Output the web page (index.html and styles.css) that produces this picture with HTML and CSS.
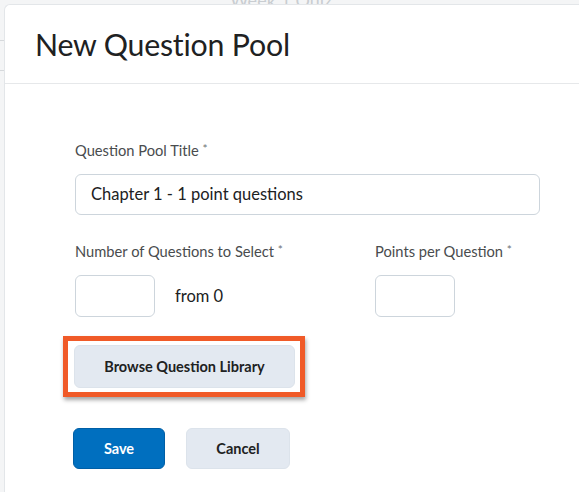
FILE: index.html
```html
<!DOCTYPE html>
<html>
<head>
<meta charset="utf-8">
<link rel="stylesheet" href="styles.css">
</head>
<body>
<div class="page">
  <div class="bg-title">Week 1 Quiz</div>
  <div class="bg-line l1"></div>
  <div class="bg-line l2"></div>
  <div class="dialog">
    <div class="header">
      <h1 class="title">New Question Pool</h1>
    </div>
    <div class="body">
      <div class="field">
        <label class="label">Question Pool Title <span class="req">*</span></label>
        <div class="input wide">Chapter 1 - 1 point questions</div>
      </div>
      <div class="row">
        <div class="field col1">
          <label class="label">Number of Questions to Select <span class="req">*</span></label>
          <div class="inline">
            <div class="input small"></div>
            <span class="from">from 0</span>
          </div>
        </div>
        <div class="field">
          <label class="label">Points per Question <span class="req">*</span></label>
          <div class="input small"></div>
        </div>
      </div>
      <div class="highlight">
        <button class="btn secondary browse">Browse Question Library</button>
      </div>
      <div class="actions">
        <button class="btn primary save">Save</button>
        <button class="btn secondary cancel">Cancel</button>
      </div>
    </div>
  </div>
</div>
</body>
</html>
```
FILE: styles.css
```css
* { box-sizing: border-box; }
html, body { margin: 0; padding: 0; }
body {
  width: 579px;
  height: 492px;
  overflow: hidden;
  background: #f4f5f6;
  font-family: Lato, "Open Sans", sans-serif;
  color: #202122;
}
.page {
  position: relative;
  width: 579px;
  height: 492px;
  padding: 4px 0 0 4px;
}
.bg-title {
  position: absolute;
  left: 230px;
  top: -11px;
  font-size: 18px;
  line-height: 22px;
  color: #c9cdd1;
}
.bg-line {
  position: absolute;
  left: 0;
  width: 4px;
  height: 1px;
  background: #d6d9dc;
}
.l1 { top: 40px; }
.l2 { top: 70px; }
.dialog {
  position: relative;
  background: #fff;
  width: 575px;
  height: 488px;
  border-top-left-radius: 6px;
  border-left: 1px solid #e3e6e9;
  border-top: 1px solid #e3e6e9;
}
.header {
  height: 79px;
  border-bottom: 1px solid #e6e8ea;
  padding: 19px 0 0 30px;
}
.title {
  margin: 0;
  font-weight: 400;
  font-size: 30.3px;
  line-height: 40px;
  color: #202122;
  letter-spacing: -0.2px;
}
.body {
  padding: 55px 0 0 70px;
}
.label {
  display: block;
  font-size: 14.7px;
  line-height: 20px;
  color: #494c4e;
  margin-bottom: 14px;
}
.req { font-size: 12px; vertical-align: 3px; color: #6e7376; }
.input {
  border: 1px solid #cdd5dc;
  border-radius: 6px;
  background: #fff;
  font-size: 16.5px;
  color: #202122;
}
.wide {
  width: 465px;
  height: 41px;
  line-height: 39px;
  padding-left: 15px;
}
.row {
  display: flex;
  margin-top: 25px;
}
.col1 { width: 300px; }
.inline {
  display: flex;
  align-items: center;
}
.small {
  width: 80px;
  height: 42px;
}
.from {
  margin-left: 20px;
  font-size: 16.5px;
  color: #202122;
}
.highlight {
  width: 242px;
  height: 61px;
  margin: 19px 0 0 -12px;
  border: 5px solid #f05a28;
  padding: 4px 0 0 6px;
  box-shadow: 1px 3px 4px rgba(0,0,0,0.35);
}
.btn {
  font-family: Lato, "Open Sans", sans-serif;
  font-weight: 700;
  font-size: 14.5px;
  border-radius: 6px;
  border: none;
  cursor: pointer;
  padding: 0;
}
.secondary {
  background: #e3e9f1;
  color: #202122;
  border: 1px solid #dce3eb;
}
.browse {
  width: 221px;
  height: 43px;
}
.actions {
  display: flex;
  gap: 21px;
  margin: 31px 0 0 -2px;
}
.primary {
  background: #006fbf;
  color: #fff;
  border: 1px solid #005fa6;
}
.save { width: 92px; height: 41px; }
.cancel { width: 104px; height: 41px; }
```
